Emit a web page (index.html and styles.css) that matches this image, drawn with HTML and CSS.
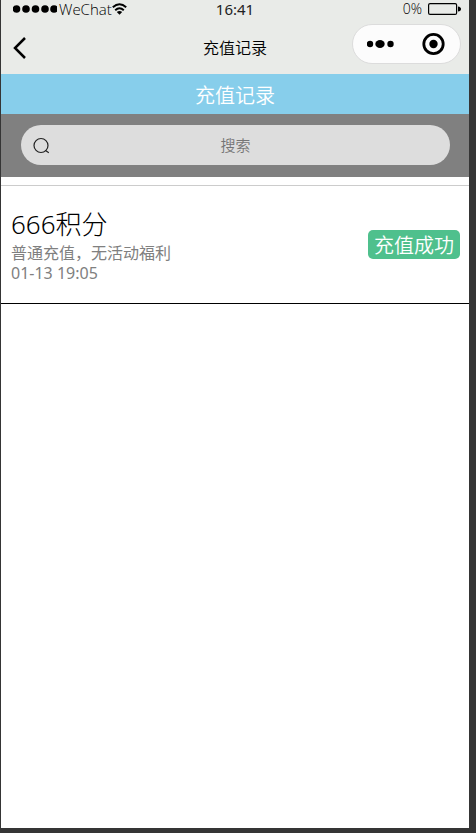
FILE: index.html
```html
<!DOCTYPE html>
<html lang="zh-CN">
<head>
<meta charset="utf-8">
<meta name="viewport" content="width=device-width, initial-scale=1">
<title>充值记录</title>
<link rel="stylesheet" href="styles.css">
</head>
<body>
<div class="phone">
  <header class="top">
    <div class="status">
      <div class="carrier">
        <svg class="signal" width="44" height="9" viewBox="0 0 44 9"><circle cx="3.5" cy="4" r="3.8"/><circle cx="13" cy="4" r="3.8"/><circle cx="22.5" cy="4" r="3.8"/><circle cx="32" cy="4" r="3.8"/><circle cx="41" cy="4" r="3.8"/></svg>
        <span>WeChat</span>
        <svg width="15" height="12" viewBox="0 0 15 12" fill="none" stroke="#000" stroke-width="2"><path d="M.8 4.200Q7.500-1.600 14.200 4.200M3.200 7.200Q7.500 3.300 11.800 7.200"/><path d="M4.800 9Q7.500 7 10.200 9L7.500 11.700Z" fill="#000" stroke="none"/></svg>
      </div>
      <time class="clock">16:41</time>
      <div class="power">
        <span>0%</span>
        <svg width="33" height="12" viewBox="0 0 33 12"><rect x=".6" y=".6" width="28" height="10.800" rx="1.500" fill="none" stroke="#000" stroke-width="1.200"/><path d="M30 3.500Q33 4 33 6T30 8.500Z"/></svg>
      </div>
    </div>
    <nav class="nav">
      <button class="back" aria-label="返回"><svg width="14" height="22" viewBox="0 0 14 22" fill="none" stroke="#000" stroke-width="2.500"><path d="M13 1L3 11L13 21"/></svg></button>
      <h1 class="title">充值记录</h1>
      <div class="capsule">
        <button aria-label="更多"><svg width="28" height="10" viewBox="0 0 28 10"><circle cx="3" cy="5" r="3.200"/><ellipse cx="13" cy="5" rx="4.700" ry="4"/><circle cx="23.500" cy="5" r="3.200"/></svg></button>
        <button aria-label="关闭"><svg width="24" height="24" viewBox="0 0 24 24"><circle cx="11.500" cy="12" r="9.700" fill="none" stroke="#000" stroke-width="2.800"/><circle cx="11.500" cy="12" r="4.200"/></svg></button>
      </div>
    </nav>
  </header>
  <h2 class="banner">充值记录</h2>
  <form class="search">
    <label class="field">
      <svg width="18" height="18" viewBox="0 0 18 18" fill="none" stroke="#222" stroke-width="1.200"><circle cx="8" cy="9.500" r="7"/><path d="M12.500 14.500L15.800 16.800"/></svg>
      <input type="text" placeholder="搜索" aria-label="搜索">
    </label>
  </form>
  <ul class="records">
    <li class="record">
      <div>
        <div class="points">666积分</div>
        <div class="note">普通充值，无活动福利</div>
        <div class="note">01-13 19:05</div>
      </div>
      <span class="badge">充值成功</span>
    </li>
  </ul>
</div>
</body>
</html>
```
FILE: styles.css
```css
* { box-sizing: border-box; }
body {
  margin: 0;
  min-height: 100vh;
  display: flex;
  background: #353535;
  font-family: "Noto Sans", "Noto Sans CJK SC", sans-serif;
  color: #000;
}
.phone {
  flex: 1;
  margin: 0 7px 5px 1px;
  background: #fff;
}
h1, h2, ul { margin: 0; padding: 0; font-weight: 350; }
svg { display: block; flex: none; }
button { border: 0; padding: 0; background: none; }
.top { background: #e9ebe8; }
.status, .nav {
  display: grid;
  grid-template-columns: 1fr auto 1fr;
  align-items: center;
}
.status {
  height: 18px;
  padding: 0 8px;
  font-size: 15px;
  line-height: 18px;
}
.carrier, .power {
  display: flex;
  align-items: center;
  font-family: "Open Sans", sans-serif;
  font-weight: 300;
}
.carrier { padding-left: 4px; }
.signal { margin-right: 2px; }
.clock { color: #222; }
.power { justify-content: flex-end; gap: 6px; font-size: 14px; }
.nav { height: 56px; padding: 4px 8px 0; }
.back { justify-self: start; margin-left: 3px; }
.title { font-size: 16px; line-height: 24px; }
.capsule {
  justify-self: end;
  display: flex;
  align-items: center;
  justify-content: space-around;
  width: 109px;
  height: 40px;
  margin-bottom: 8px;
  border: 1px solid #dcdcdc;
  border-radius: 20px;
  background: #fcfcfc;
}
.banner {
  padding-top: 4px;
  background: #87ceeb;
  color: #fff;
  font-size: 20px;
  line-height: 36px;
  text-align: center;
}
.search { background: #808080; padding: 11px 19px 12px 20px; }
.field {
  display: flex;
  align-items: center;
  height: 40px;
  padding: 0 12px;
  border-radius: 20px;
  background: #ddd;
}
.field input {
  flex: 1;
  min-width: 0;
  margin-right: 18px;
  padding: 0;
  border: 0;
  outline: 0;
  background: none;
  font: 350 15px/24px "Noto Sans", "Noto Sans CJK SC", sans-serif;
  text-align: center;
}
.field input::placeholder { color: #757575; }
.records { margin-top: 8px; border-top: 1px solid #ccc; list-style: none; }
.record {
  display: flex;
  align-items: center;
  justify-content: space-between;
  padding: 20px 9px 20px 10px;
  border-bottom: 1px solid #000;
}
.points { font-size: 26px; line-height: 37px; font-weight: 300; }
.note { font-size: 16px; line-height: 20px; color: #808080; font-weight: 400; }
.badge {
  padding: 2px 6px 0;
  border-radius: 5px;
  background: #4fc08d;
  color: #fff;
  font-size: 20px;
  line-height: 27px;
  font-weight: 350;
}
```
